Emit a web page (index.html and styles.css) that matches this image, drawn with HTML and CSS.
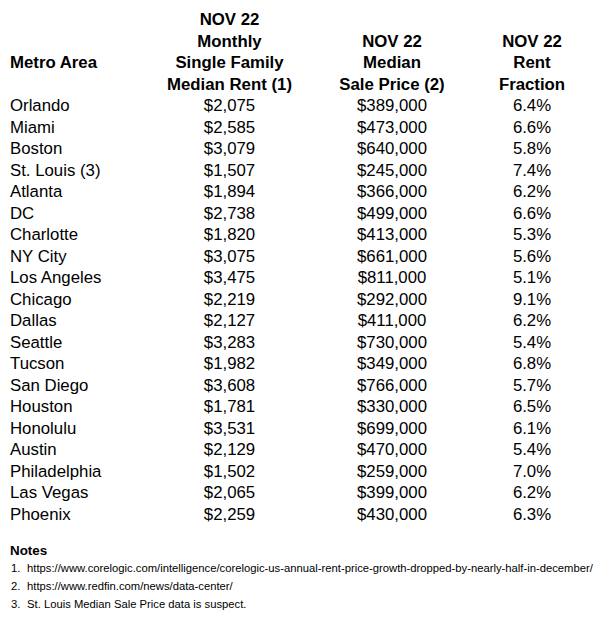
FILE: index.html
```html
<!DOCTYPE html>
<html>
<head>
<meta charset="utf-8">
<link rel="stylesheet" href="styles.css">
</head>
<body>
<div class="page">
  <div class="table">
    <div class="row head">
      <div class="c1 metro">Metro Area</div>
      <div class="c">NOV 22<br>Monthly<br>Single Family<br>Median Rent (1)</div>
      <div class="c"><br>NOV 22<br>Median<br>Sale Price (2)</div>
      <div class="c"><br>NOV 22<br>Rent<br>Fraction</div>
    </div>
    <div class="row"><div class="c1">Orlando</div><div class="c">$2,075</div><div class="c">$389,000</div><div class="c">6.4%</div></div>
    <div class="row"><div class="c1">Miami</div><div class="c">$2,585</div><div class="c">$473,000</div><div class="c">6.6%</div></div>
    <div class="row"><div class="c1">Boston</div><div class="c">$3,079</div><div class="c">$640,000</div><div class="c">5.8%</div></div>
    <div class="row"><div class="c1">St. Louis (3)</div><div class="c">$1,507</div><div class="c">$245,000</div><div class="c">7.4%</div></div>
    <div class="row"><div class="c1">Atlanta</div><div class="c">$1,894</div><div class="c">$366,000</div><div class="c">6.2%</div></div>
    <div class="row"><div class="c1">DC</div><div class="c">$2,738</div><div class="c">$499,000</div><div class="c">6.6%</div></div>
    <div class="row"><div class="c1">Charlotte</div><div class="c">$1,820</div><div class="c">$413,000</div><div class="c">5.3%</div></div>
    <div class="row"><div class="c1">NY City</div><div class="c">$3,075</div><div class="c">$661,000</div><div class="c">5.6%</div></div>
    <div class="row"><div class="c1">Los Angeles</div><div class="c">$3,475</div><div class="c">$811,000</div><div class="c">5.1%</div></div>
    <div class="row"><div class="c1">Chicago</div><div class="c">$2,219</div><div class="c">$292,000</div><div class="c">9.1%</div></div>
    <div class="row"><div class="c1">Dallas</div><div class="c">$2,127</div><div class="c">$411,000</div><div class="c">6.2%</div></div>
    <div class="row"><div class="c1">Seattle</div><div class="c">$3,283</div><div class="c">$730,000</div><div class="c">5.4%</div></div>
    <div class="row"><div class="c1">Tucson</div><div class="c">$1,982</div><div class="c">$349,000</div><div class="c">6.8%</div></div>
    <div class="row"><div class="c1">San Diego</div><div class="c">$3,608</div><div class="c">$766,000</div><div class="c">5.7%</div></div>
    <div class="row"><div class="c1">Houston</div><div class="c">$1,781</div><div class="c">$330,000</div><div class="c">6.5%</div></div>
    <div class="row"><div class="c1">Honolulu</div><div class="c">$3,531</div><div class="c">$699,000</div><div class="c">6.1%</div></div>
    <div class="row"><div class="c1">Austin</div><div class="c">$2,129</div><div class="c">$470,000</div><div class="c">5.4%</div></div>
    <div class="row"><div class="c1">Philadelphia</div><div class="c">$1,502</div><div class="c">$259,000</div><div class="c">7.0%</div></div>
    <div class="row"><div class="c1">Las Vegas</div><div class="c">$2,065</div><div class="c">$399,000</div><div class="c">6.2%</div></div>
    <div class="row"><div class="c1">Phoenix</div><div class="c">$2,259</div><div class="c">$430,000</div><div class="c">6.3%</div></div>
  </div>
  <div class="notes">
    <div class="notes-title">Notes</div>
    <div class="note"><span class="num">1.</span><span>https://www.corelogic.com/intelligence/corelogic-us-annual-rent-price-growth-dropped-by-nearly-half-in-december/</span></div>
    <div class="note"><span class="num">2.</span><span>https://www.redfin.com/news/data-center/</span></div>
    <div class="note"><span class="num">3.</span><span>St. Louis Median Sale Price data is suspect.</span></div>
  </div>
</div>
</body>
</html>
```

FILE: styles.css
```css
html, body {
  margin: 0;
  padding: 0;
  background: #ffffff;
}
body {
  font-family: "Liberation Sans", Arial, sans-serif;
  color: #000;
}
.page {
  width: 600px;
  height: 624px;
  padding: 9px 0 0 10px;
  box-sizing: border-box;
  overflow: hidden;
}
.table {
  font-size: 16.8px;
  line-height: 21.5px;
}
.row {
  display: grid;
  grid-template-columns: 150px 139px 186px 94px;
}
.head {
  font-weight: bold;
}
.c1 {
  text-align: left;
  white-space: nowrap;
}
.metro {
  padding-top: 43px;
}
.c {
  text-align: center;
  white-space: nowrap;
}
.notes {
  margin-top: 18px;
}
.notes-title {
  font-size: 13.4px;
  font-weight: bold;
  line-height: 16px;
}
.note {
  display: flex;
  font-size: 11.25px;
  line-height: 18px;
  white-space: nowrap;
}
.num {
  width: 16px;
  flex: none;
  padding-left: 1px;
}
```
